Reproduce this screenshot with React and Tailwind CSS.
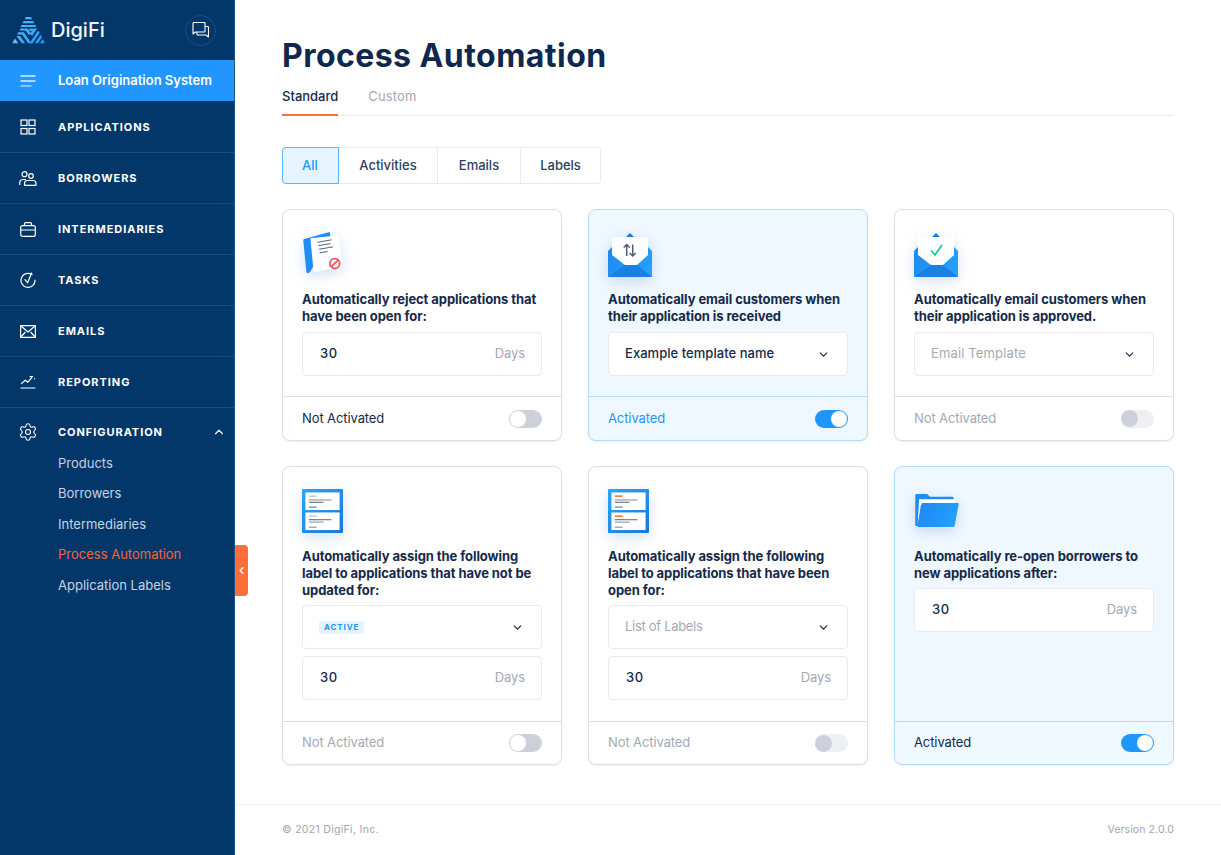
import React from "react";
import { ChevronDown, ChevronLeft, ChevronUp, Settings } from "lucide-react";

const iconShadow = "drop-shadow-[0_4px_7px_rgba(30,90,180,0.2)]";

const Logo = () => (
  <svg width="33" height="28" viewBox="0 0 33 28" fill="none">
    <defs>
      <linearGradient id="logoG" x1="0" y1="0" x2="33" y2="28" gradientUnits="userSpaceOnUse">
        <stop offset="0" stopColor="#62c4f5" />
        <stop offset="1" stopColor="#2196ff" />
      </linearGradient>
    </defs>
    <path d="M14 1h5l1.200 2.200h-7.400z" fill="url(#logoG)" />
    <path d="M11.800 5h9.400l1.200 2.200H10.600z" fill="url(#logoG)" />
    <path d="M9.600 9h13.800l1.100 2H8.600z" fill="url(#logoG)" />
    <path d="M8.600 12.600h7l4.400 6.200h-3.400l-3-4.200H7.400z" fill="url(#logoG)" />
    <path d="M17.600 12.600h7.600l-5 7.400-1.900-2.600 1.500-2.400-3.200-.2z" fill="#3aa8f0" />
    <path d="M6.400 16.200h5.400l7.600 11h-3.200l-6-8.800H5.200z" fill="url(#logoG)" />
    <path d="M4.400 20h3.600l5.200 7.200H10z" fill="url(#logoG)" />
    <path d="M3 22.600l3.200 4.600H.2z" fill="#62c4f5" />
    <path d="M26.200 14.600l1.400 2.400-7 10.200h-3z" fill="url(#logoG)" />
    <path d="M28.600 18.800l1.300 2.400-4 6h-3z" fill="url(#logoG)" />
    <path d="M30.800 23l2 4.200h-4.800z" fill="url(#logoG)" />
  </svg>
);

const ChatIcon = () => (
  <svg width="17" height="16" viewBox="0 0 17 16" fill="none" stroke="currentColor" strokeWidth="1.100" strokeLinejoin="round">
    <path d="M1 1.500a1 1 0 0 1 1-1h10a1 1 0 0 1 1 1v7.500a1 1 0 0 1-1 1H3.500L1 12z" />
    <path d="M13 4.500h2.500a1 1 0 0 1 1 1v9.500L14 13H6a1 1 0 0 1-1-1v-2" />
  </svg>
);

const MenuIcon = () => (
  <svg width="16" height="14" viewBox="0 0 16 14" fill="none" strokeWidth="1.400" strokeLinecap="round">
    <path d="M1 2h14M1 7h14" stroke="#ffffff" strokeOpacity="0.85" />
    <path d="M1 12h10" stroke="#ffffff" strokeOpacity="0.6" />
  </svg>
);

const GridIcon = () => (
  <svg width="16" height="16" viewBox="0 0 16 16" fill="none" stroke="currentColor" strokeWidth="1.200">
    <rect x="1" y="1" width="6" height="5.500" />
    <rect x="9" y="1" width="6" height="5.500" />
    <rect x="1" y="9.500" width="6" height="5.500" />
    <rect x="9" y="9.500" width="6" height="5.500" />
  </svg>
);

const PeopleIcon = () => (
  <svg width="18" height="15" viewBox="0 0 18 15" fill="none" stroke="currentColor" strokeWidth="1.200" strokeLinejoin="round">
    <circle cx="5.500" cy="3.200" r="2.500" />
    <circle cx="12" cy="5" r="2.300" />
    <path d="M.7 14v-2.500a3.300 3.300 0 0 1 3.300-3h3" />
    <path d="M5.500 14.300v-1.800a3 3 0 0 1 3-3h5.500a3 3 0 0 1 3 3v1.800z" />
  </svg>
);

const BriefcaseIcon = () => (
  <svg width="16" height="15" viewBox="0 0 16 15" fill="none" stroke="currentColor" strokeWidth="1.200" strokeLinejoin="round">
    <rect x="0.700" y="3.600" width="14.600" height="10.800" rx="2" />
    <path d="M4.500 3.600V1.600a1 1 0 0 1 1-1h5a1 1 0 0 1 1 1v2M.7 8h14.600" />
  </svg>
);

const TaskIcon = () => (
  <svg width="16" height="16" viewBox="0 0 16 16" fill="none" stroke="currentColor" strokeWidth="1.200" strokeLinecap="round" strokeLinejoin="round">
    <path d="M12 2.600A7 7 0 1 0 15 8" />
    <path d="M5 7.600l2.600 3.200L11.600 1" />
  </svg>
);

const MailIcon = () => (
  <svg width="16" height="13" viewBox="0 0 16 13" fill="none" stroke="currentColor" strokeWidth="1.200" strokeLinejoin="round">
    <rect x="0.600" y="0.600" width="14.800" height="11.800" />
    <path d="M1 1l7 6 7-6M1 12l4.400-5M15 12l-4.400-5" />
  </svg>
);

const ChartIcon = () => (
  <svg width="16" height="14" viewBox="0 0 16 14" fill="none" stroke="currentColor" strokeWidth="1.200" strokeLinecap="round" strokeLinejoin="round">
    <path d="M1 13h14" />
    <path d="M1.400 8.600l3.800-3.400 2.600 2 4-4.600" />
    <path d="M10 1.600h2.600M14.600 3.600v.2" />
  </svg>
);

const DocIcon = () => (
  <svg width="44" height="47" viewBox="0 0 46 50" fill="none" className={iconShadow}>
    <path d="M2 8.500L29 1l1 5L8 44l-2 .8a1.500 1.500 0 0 1-1.700-1L1 10.300a1.500 1.500 0 0 1 1-1.800z" fill="#1e8df5" />
    <path d="M8.500 7.800L39 4.500l3.800 33.400-30.800 6.100z" fill="#ffffff" />
    <path d="M16 12l15-2.600M17 15.600l13-2.200M17.600 19.400l15-2.500M18.400 23.200l8.400-1.400" stroke="#4a5a78" strokeWidth="1" />
    <circle cx="34.500" cy="34.500" r="5.200" fill="#ffffff" stroke="#f4505a" strokeWidth="1.800" />
    <path d="M31 38l7-7" stroke="#f4505a" strokeWidth="1.800" />
  </svg>
);

const EnvelopeIcon = ({ id, children }) => (
  <svg width="44" height="44" viewBox="0 0 44 44" fill="none" className={`mt-[2px] ${iconShadow}`}>
    <defs>
      <linearGradient id={id} x1="0" y1="14" x2="44" y2="44" gradientUnits="userSpaceOnUse">
        <stop offset="0" stopColor="#1e88ee" />
        <stop offset="1" stopColor="#27a2ff" />
      </linearGradient>
    </defs>
    <path d="M18 4l4-4 4 4z" fill="#1e78e0" />
    <path d="M0 18l4-4h36l4 4v25a1 1 0 0 1-1 1H1a1 1 0 0 1-1-1z" fill={`url(#${id})`} />
    <path d="M0 44l17-12h12l15 12z" fill="#1b7fe6" />
    <path d="M4 4h36v18L29 32H17L4 22z" fill="#ffffff" />
    {children}
  </svg>
);

const FormIcon = ({ accent, id }) => (
  <svg width="41" height="44" viewBox="0 0 42 45" fill="none" className={`mt-px ${iconShadow}`}>
    <defs>
      <linearGradient id={id} x1="0" y1="0" x2="42" y2="46" gradientUnits="userSpaceOnUse">
        <stop offset="0" stopColor="#28a8f5" />
        <stop offset="1" stopColor="#1b74dc" />
      </linearGradient>
    </defs>
    <rect width="42" height="45" rx="1" fill={`url(#${id})`} />
    <rect x="3.500" y="3.500" width="35" height="18" fill="#ffffff" />
    <rect x="3.500" y="24" width="35" height="18" fill="#ffffff" />
    <rect x="7" y="6.500" width="8" height="1.600" fill={accent} />
    <rect x="7" y="10.500" width="23" height="1.400" fill="#a3a9b7" />
    <rect x="7" y="13" width="15" height="1.200" fill="#6b7891" />
    <rect x="7" y="18" width="8" height="1" fill="#45638a" />
    <rect x="7" y="27" width="8" height="1.600" fill={accent} />
    <rect x="7" y="30.800" width="23" height="1.200" fill="#6b7891" />
    <rect x="7" y="33.200" width="15" height="1.400" fill="#a3a9b7" />
    <rect x="7" y="38.500" width="8" height="1.200" fill="#8893a8" />
  </svg>
);

const FolderIcon = () => (
  <svg width="46" height="34" viewBox="0 0 46 36" fill="none" className={`mt-[6px] ${iconShadow}`}>
    <defs>
      <linearGradient id="folderG" x1="4" y1="12" x2="46" y2="34" gradientUnits="userSpaceOnUse">
        <stop offset="0" stopColor="#1e88f5" />
        <stop offset="1" stopColor="#25a2ff" />
      </linearGradient>
    </defs>
    <path d="M0 1.500A1.500 1.500 0 0 1 1.500 0h11l3 3h24a1 1 0 0 1 1 1v6L3 34H1a1 1 0 0 1-1-1z" fill="#1e8cf5" />
    <path d="M4 5.500h38v6H6L2.500 33z" fill="#ffffff" />
    <path d="M7 9.500h38a1 1 0 0 1 1 1.200l-4.300 23a1.500 1.500 0 0 1-1.500 1.300H2.500z" fill="url(#folderG)" />
  </svg>
);

const Toggle = ({ on, muted }) => {
  if (on) {
    return (
      <span className="flex h-[18px] w-[33px] items-center justify-end rounded-full bg-[#1f96fc] p-px">
        <span className="size-4 rounded-full bg-white" />
      </span>
    );
  }
  return (
    <span className={`flex h-[18px] w-[33px] items-center rounded-full ${muted ? "bg-[#eff0f3]" : "bg-[#ccd0d9] p-px"}`}>
      <span className={`rounded-full ${muted ? "size-[17px] bg-[#cdd0da]" : "size-4 bg-white"}`} />
    </span>
  );
};

const DaysInput = () => (
  <div className="flex h-[44px] items-center justify-between rounded-[4px] border border-[#e8eaef] bg-white pl-[17px] pr-4 text-[13px]">
    <span className="font-medium tracking-[0.6px] text-[#15294a]">30</span>
    <span className="tracking-[-0.1px] text-[#a4a9b6]">Days</span>
  </div>
);

const SelectInput = ({ children }) => (
  <div className="flex h-[44px] items-center justify-between rounded-[4px] border border-[#e8eaef] bg-white pl-4 pr-[17px] text-[13px]">
    {children}
    <ChevronDown size={13} strokeWidth={2.2} className="text-[#15294a]" />
  </div>
);

const Card = ({ icon, title, active, labelClass, label, on, muted, tall, children }) => (
  <div className={`flex flex-col rounded-lg border shadow-[0_1px_2px_rgba(20,40,80,0.08)] ${active ? "border-[#b6dcfd] bg-[#f0f8ff]" : "border-[#dcdfe7] bg-white"}`}>
    <div className="flex flex-1 flex-col px-[19px]">
      <div className="flex h-[81px] items-start pt-[21px]">{icon}</div>
      <div className="text-[13px] font-bold leading-[17px] tracking-[-0.08px] text-[#15294a]">{title}</div>
      <div className={`flex flex-col pb-5 ${tall ? "mt-[6px] gap-[7px]" : "mt-[7px]"}`}>{children}</div>
    </div>
    <div className={`flex items-center justify-between border-t px-[19px] ${tall ? "h-[43px]" : "h-[44px]"} ${active ? "border-[#b6dcfd]" : "border-[#dcdfe7]"}`}>
      <span className={`text-[13px] tracking-[-0.1px] ${labelClass}`}>{label}</span>
      <Toggle on={on} muted={muted} />
    </div>
  </div>
);

const navItems = [
  { name: "APPLICATIONS", icon: <GridIcon /> },
  { name: "BORROWERS", icon: <PeopleIcon /> },
  { name: "INTERMEDIARIES", icon: <BriefcaseIcon /> },
  { name: "TASKS", icon: <TaskIcon /> },
  { name: "EMAILS", icon: <MailIcon /> },
  { name: "REPORTING", icon: <ChartIcon /> },
];

const subItems = ["Products", "Borrowers", "Intermediaries", "Process Automation", "Application Labels"];

const Sidebar = () => (
  <aside className="relative flex w-[235px] shrink-0 flex-col border-r border-[#1d5488] bg-[#03376a] text-white">
    <div className="flex h-[60px] items-center justify-between pl-3 pr-[18px]">
      <div className="flex items-center gap-[6px]">
        <Logo />
        <span className="text-[20px] font-medium leading-none text-[#f2f6fa]">DigiFi</span>
      </div>
      <span className="flex size-[31px] items-center justify-center rounded-full border border-[#1f4c7c]">
        <ChatIcon />
      </span>
    </div>
    <div className="flex h-[41px] items-center bg-[#2196fe] pt-px">
      <span className="flex w-[58px] justify-center pr-[3px]"><MenuIcon /></span>
      <span className="text-[13px] font-semibold">Loan Origination System</span>
    </div>
    <div className="flex flex-col pt-px">
      {navItems.map((item) => (
        <div key={item.name} className="flex h-[51px] items-center border-b border-[#1a4b7c]">
          <span className="flex w-[58px] justify-center pr-[3px]">{item.icon}</span>
          <span className="text-[11px] font-bold tracking-[0.95px]">{item.name}</span>
        </div>
      ))}
    </div>
    <div className="flex h-[40px] items-center justify-between pr-2 pt-2">
      <div className="flex items-center">
        <span className="flex w-[58px] justify-center pr-[3px]"><Settings size={20} strokeWidth={1.3} /></span>
        <span className="text-[11px] font-bold tracking-[0.95px]">CONFIGURATION</span>
      </div>
      <ChevronUp size={14} strokeWidth={2} />
    </div>
    <div className="flex flex-col pl-[58px] text-[13px]">
      {subItems.map((item) => (
        <div key={item} className={`flex h-[30.6px] items-center ${item === "Process Automation" ? "text-[#f2643a]" : "text-[#c6d3e1]"}`}>
          {item}
        </div>
      ))}
    </div>
    <div className="absolute left-[235px] top-[545px] flex h-[51px] w-[13px] items-center justify-center rounded-r-[4px] bg-[#ff6f3a]">
      <ChevronLeft size={11} strokeWidth={3} />
    </div>
  </aside>
);

const App = () => {
  return (
    <div className="flex min-h-[855px] w-full bg-white font-['Inter',sans-serif]">
      <Sidebar />
      <main className="flex min-w-0 flex-1 flex-col">
        <div className="flex-1 px-[47px] pt-[37px]">
          <h1 className="text-[32px] font-bold leading-[38px] tracking-[0.45px] text-[#10284d]">Process Automation</h1>
          <div className="mt-[9px] flex h-[32px] gap-[30px] border-b border-[#e8eaef] text-[13px]">
            <span className="-mb-px h-[32px] border-b-2 border-[#ff6f3a] pt-[3px] font-medium text-[#15294a]">Standard</span>
            <span className="pt-[3px] tracking-[0.15px] text-[#a4a9b6]">Custom</span>
          </div>
          <div className="mt-[31px] flex h-[37px] w-[319px] rounded-[4px] text-[13px] font-medium text-[#2f405f]">
            <span className="flex w-[57px] items-center justify-center rounded-l-[4px] border border-[#5db4fd] bg-[#e6f4ff] pr-px text-[#2196fe]">All</span>
            <span className="flex w-[99px] items-center justify-center border-y border-r border-[#e8eaef]">Activities</span>
            <span className="flex w-[83px] items-center justify-center border-y border-r border-[#e8eaef]">Emails</span>
            <span className="flex w-[80px] items-center justify-center rounded-r-[4px] border-y border-r border-[#e8eaef]">Labels</span>
          </div>
          <div className="mt-[25px] grid grid-cols-3 grid-rows-[232px_299px] gap-x-[26px] gap-y-[25px]">
            <Card
              icon={<DocIcon />}
              title="Automatically reject applications that have been open for:"
              labelClass="text-[#15294a]"
              label="Not Activated"
            >
              <DaysInput />
            </Card>
            <Card
              active
              on
              icon={
                <EnvelopeIcon id="envA">
                  <path d="M18.700 23V11.500M15.700 14.500l3-3 3 3M24.700 11.500V23M21.700 20l3 3 3-3" stroke="#4d5a75" strokeWidth="1.500" />
                </EnvelopeIcon>
              }
              title="Automatically email customers when their application is received"
              labelClass="text-[#2196fe]"
              label="Activated"
            >
              <SelectInput>
                <span className="font-medium tracking-[0.04px] text-[#15294a]">Example template name</span>
              </SelectInput>
            </Card>
            <Card
              muted
              icon={
                <EnvelopeIcon id="envB">
                  <path d="M17 17.500l4 4.500 7-10" stroke="#14c4a2" strokeWidth="1.700" />
                </EnvelopeIcon>
              }
              title="Automatically email customers when their application is approved."
              labelClass="text-[#a4a9b6]"
              label="Not Activated"
            >
              <SelectInput>
                <span className="tracking-[0.14px] text-[#a4a9b6]">Email Template</span>
              </SelectInput>
            </Card>
            <Card
              tall
              icon={<FormIcon accent="#c9ccd5" id="formA" />}
              title="Automatically assign the following label to applications that have not be updated for:"
              labelClass="text-[#a4a9b6]"
              label="Not Activated"
            >
              <SelectInput>
                <span className="rounded-[2px] bg-[#e6f4ff] px-[5px] py-px text-[8px] font-bold leading-[11px] tracking-[0.9px] text-[#2196fe]">ACTIVE</span>
              </SelectInput>
              <DaysInput />
            </Card>
            <Card
              tall
              muted
              icon={<FormIcon accent="#ff6f3a" id="formB" />}
              title="Automatically assign the following label to applications that have been open for:"
              labelClass="text-[#a4a9b6]"
              label="Not Activated"
            >
              <SelectInput>
                <span className="tracking-[-0.3px] text-[#a4a9b6]">List of Labels</span>
              </SelectInput>
              <DaysInput />
            </Card>
            <Card
              tall
              active
              on
              icon={<FolderIcon />}
              title="Automatically re-open borrowers to new applications after:"
              labelClass="text-[#15294a]"
              label="Activated"
            >
              <DaysInput />
            </Card>
          </div>
        </div>
        <footer className="flex h-[51px] items-center justify-between border-t border-[#f0f1f4] px-[47px] text-[10.5px] tracking-[0.3px] text-[#9ea4b3]">
          <span>© 2021 DigiFi, Inc.</span>
          <span className="tracking-[0.1px]">Version 2.0.0</span>
        </footer>
      </main>
    </div>
  );
};

export default App;
